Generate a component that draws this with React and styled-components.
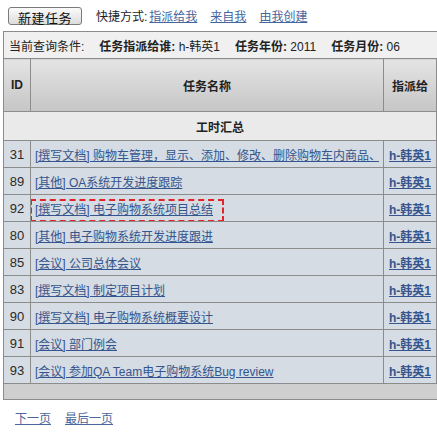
import React from 'react';
import styled, { createGlobalStyle } from 'styled-components';

const Global = createGlobalStyle`
  html, body { margin: 0; padding: 0; background: #fff; overflow: hidden; }
  body {
    font-family: "Liberation Sans", Arial, "Noto Sans CJK SC", sans-serif;
    font-size: 12px;
    color: #222;
  }
`;

const Page = styled.div`
  width: 437px;
  height: 436px;
  overflow: hidden;
`;

const Toolbar = styled.div`
  display: flex;
  align-items: center;
  height: 31px;
  padding-left: 8px;
  box-sizing: border-box;
`;

const NewButton = styled.button`
  height: 18px;
  width: 74px;
  padding: 0;
  font: 13px "Liberation Sans", "Noto Sans CJK SC", sans-serif;
  letter-spacing: 0.5px;
  color: #111;
  border: 1px solid #7a7a7a;
  border-radius: 3px;
  background: linear-gradient(#fbfbfb, #dcdcdc);
  margin-right: 14px;
`;

const Label = styled.span`
  color: #222;
  margin-right: 2px;
`;

const QuickLink = styled.a`
  color: #44659d;
  text-decoration: underline;
  margin-right: 13px;
  cursor: pointer;
`;

const Grid = styled.table`
  margin-left: 3px;
  border-collapse: collapse;
  table-layout: fixed;
  width: 453px;
  border: 1px solid #8c8c8c;
`;

const ConditionCell = styled.td`
  height: 26px;
  padding: 0 0 0 5px;
  background: #f0f0f0;
  border: 1px solid #8c8c8c;
  white-space: nowrap;
`;

const CondGroup = styled.span`
  margin-left: ${p => (p.$first ? 0 : 15)}px;
`;

const CondKey = styled.b`
  font-weight: bold;
`;

const HeadCell = styled.th`
  height: 52px;
  padding: 0;
  font-weight: bold;
  text-align: center;
  background: linear-gradient(#e4e4e4, #c6c6c6);
  border: 1px solid #8c8c8c;
  white-space: nowrap;
`;

const SummaryCell = styled.td`
  height: 28px;
  padding: 0;
  font-weight: bold;
  text-align: center;
  background: #eaeaea;
  border: 1px solid #8c8c8c;
`;

const DataCell = styled.td`
  height: 26px;
  padding: 0 ${p => (p.$pad ?? 4)}px;
  background: #d5dce4;
  border: 1px solid #8c8c8c;
  text-align: ${p => p.$align || 'left'};
  white-space: nowrap;
  overflow: hidden;
  font-size: ${p => (p.$num ? 13 : 12)}px;
  color: #2a2a2a;
`;

const NameClip = styled.div`
  overflow: hidden;
  white-space: nowrap;
  padding: 6px 0;
  margin: -6px 0;
`;

const TaskLink = styled.a`
  position: relative;
  color: #34558d;
  text-decoration: underline;
  cursor: pointer;
  ${p =>
    p.$focused &&
    `
    &::after {
      content: "";
      position: absolute;
      left: -5px;
      right: -11px;
      top: -4px;
      bottom: -5px;
      border: 2px dashed #e0242a;
    }
  `}
`;

const FocusPad = styled.div`
  padding-left: 0;
`;

const AssigneeLink = styled.a`
  color: #34558d;
  font-weight: bold;
  text-decoration: underline;
  cursor: pointer;
`;

const FooterCell = styled.td`
  height: 15px;
  padding: 0;
  background: #cfcfcf;
  border: 1px solid #8c8c8c;
`;

const Pager = styled.div`
  display: flex;
  gap: 14px;
  padding: 9px 0 0 15px;
`;

const PagerLink = styled.a`
  color: #4a669a;
  text-decoration: underline;
  cursor: pointer;
`;

const rows = [
  { id: 31, name: '[撰写文档] 购物车管理，显示、添加、修改、删除购物车内商品、清空购物车' },
  { id: 89, name: '[其他] OA系统开发进度跟踪' },
  { id: 92, name: '[撰写文档] 电子购物系统项目总结', focused: true },
  { id: 80, name: '[其他] 电子购物系统开发进度跟进' },
  { id: 85, name: '[会议] 公司总体会议' },
  { id: 83, name: '[撰写文档] 制定项目计划' },
  { id: 90, name: '[撰写文档] 电子购物系统概要设计' },
  { id: 91, name: '[会议] 部门例会' },
  { id: 93, name: '[会议] 参加QA Team电子购物系统Bug review' },
];

export default function App() {
  return (
    <Page>
      <Global />
      <Toolbar>
        <NewButton>新建任务</NewButton>
        <Label>快捷方式:</Label>
        <QuickLink>指派给我</QuickLink>
        <QuickLink>来自我</QuickLink>
        <QuickLink>由我创建</QuickLink>
      </Toolbar>
      <Grid>
        <colgroup>
          <col style={{ width: 27 }} />
          <col style={{ width: 353 }} />
          <col style={{ width: 53 }} />
          <col style={{ width: 20 }} />
        </colgroup>
        <tbody>
          <tr>
            <ConditionCell colSpan={4}>
              <CondGroup $first>当前查询条件:</CondGroup>
              <CondGroup><CondKey>任务指派给谁:</CondKey> h-韩英1</CondGroup>
              <CondGroup><CondKey>任务年份:</CondKey> 2011</CondGroup>
              <CondGroup><CondKey>任务月份:</CondKey> 06</CondGroup>
            </ConditionCell>
          </tr>
          <tr>
            <HeadCell>ID</HeadCell>
            <HeadCell>任务名称</HeadCell>
            <HeadCell>指派给</HeadCell>
            <HeadCell />
          </tr>
          <tr>
            <SummaryCell colSpan={3}>工时汇总</SummaryCell>
            <SummaryCell />
          </tr>
          {rows.map(r => (
            <tr key={r.id}>
              <DataCell $align="center" $pad={0} $num>{r.id}</DataCell>
              <DataCell>
                {r.focused ? (
                  <FocusPad>
                    <TaskLink $focused>{r.name}</TaskLink>
                  </FocusPad>
                ) : (
                  <NameClip>
                    <TaskLink>{r.name}</TaskLink>
                  </NameClip>
                )}
              </DataCell>
              <DataCell $align="center" $pad={0}>
                <AssigneeLink>h-韩英1</AssigneeLink>
              </DataCell>
              <DataCell />
            </tr>
          ))}
          <tr>
            <FooterCell colSpan={4} />
          </tr>
        </tbody>
      </Grid>
      <Pager>
        <PagerLink>下一页</PagerLink>
        <PagerLink>最后一页</PagerLink>
      </Pager>
    </Page>
  );
}
